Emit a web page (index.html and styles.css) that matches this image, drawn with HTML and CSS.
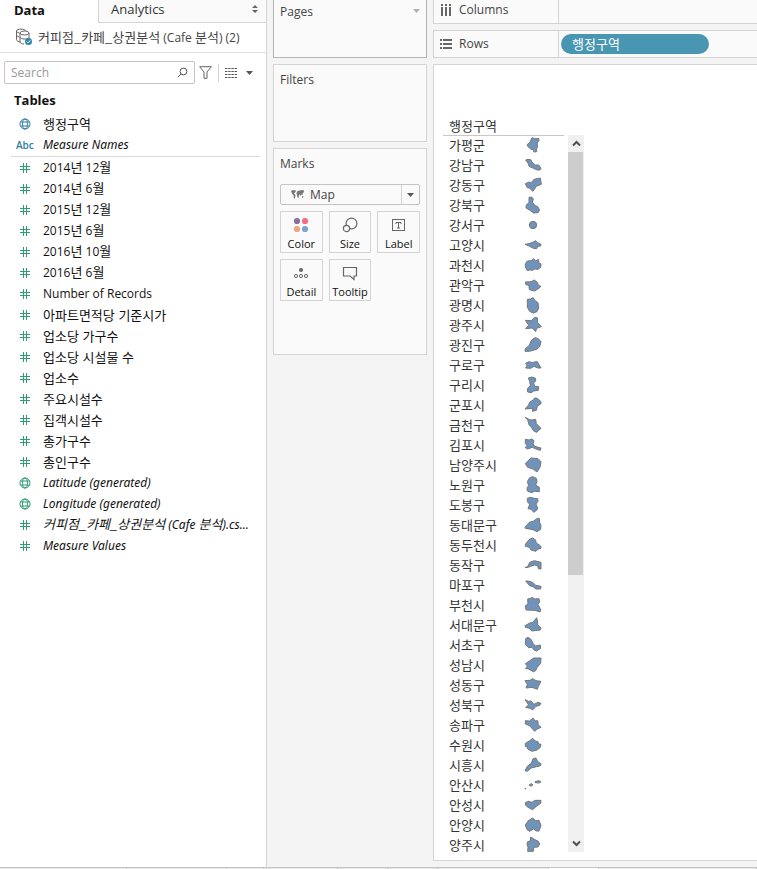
FILE: index.html
```html
<!DOCTYPE html>
<html lang="ko">
<head>
<meta charset="utf-8">
<title>커피점_카페_상권분석</title>
<link rel="stylesheet" href="styles.css">
</head>
<body>
<svg class="defs" aria-hidden="true">
  <symbol id="hash" viewBox="0 0 12 12"><path d="M4.5 1v10M7.5 1v10M1 4.5h10M1 7.5h10"/></symbol>
  <symbol id="globe" viewBox="0 0 12 12"><circle cx="6" cy="6" r="5"/><ellipse cx="6" cy="6" rx="2.4" ry="5"/><path d="M1.5 4h9M1.5 8h9"/></symbol>
</svg>
<div class="workspace">
  <aside class="data-pane">
    <div class="tabs">
      <button class="tab active">Data</button>
      <button class="tab">Analytics
        <svg width="6" height="8" viewBox="0 0 6 8"><path d="M0 3l3-3 3 3zM0 5h6l-3 3z"/></svg>
      </button>
    </div>
    <div class="source">
      <svg width="18" height="18" viewBox="0 0 18 18" fill="none" stroke="#666">
        <path d="M1.5 3v8.500c0 1.500 2 2.500 4 2.500M1.500 3c0-2.500 9-2.500 9 0M1.500 3c0 1 1 1.500 3 2M1.500 7c0 1 1 1.500 2.500 1.800"/>
        <ellipse cx="9.500" cy="5" rx="4.500" ry="2"/><path d="M5 5v9c0 1 2 2 4 2M14 5v5M5 9c0 2 5 2.500 8 1.500"/>
        <circle cx="13.500" cy="13.500" r="3.500" fill="#3186a6" stroke="none"/><path d="M11.800 13.500l1.300 1.300 2.400-2.600" stroke="#fff"/>
      </svg>
      <span><span class="ko">커피점_카페_상권분석</span> (Cafe <span class="ko">분석</span>) (2)</span>
    </div>
    <div class="tools">
      <div class="search">
        <input type="text" placeholder="Search" aria-label="Search">
        <svg width="11" height="11" viewBox="0 0 11 11" fill="none" stroke="#555"><circle cx="6.500" cy="4.500" r="3.400"/><path d="M4 7L.8 10.200"/></svg>
      </div>
      <button class="tool" aria-label="Filter"><svg width="13" height="13" viewBox="0 0 13 13" fill="none" stroke="#666"><path d="M.7.700h11.600L8 6v6.300H5V6z"/></svg></button>
      <span class="rule"></span>
      <button class="tool view" aria-label="View">
        <svg width="13" height="10" viewBox="0 0 13 10" stroke="#555"><path d="M0 .5h12M0 3.500h12M0 6.500h12M0 9.500h12" stroke-dasharray="2.400 .8"/></svg>
        <svg width="7" height="4" viewBox="0 0 7 4"><path d="M0 0h7L3.500 4z" fill="#555"/></svg>
      </button>
    </div>
    <h2>Tables</h2>
    <ul class="fields dims">
      <li><svg><use href="#globe"/></svg><span class="ko">행정구역</span></li>
      <li><b class="abc">Abc</b><i>Measure Names</i></li>
    </ul>
    <ul class="fields">
      <li><svg><use href="#hash"/></svg><span>2014<span class="ko">년</span> 12<span class="ko">월</span></span></li>
      <li><svg><use href="#hash"/></svg><span>2014<span class="ko">년</span> 6<span class="ko">월</span></span></li>
      <li><svg><use href="#hash"/></svg><span>2015<span class="ko">년</span> 12<span class="ko">월</span></span></li>
      <li><svg><use href="#hash"/></svg><span>2015<span class="ko">년</span> 6<span class="ko">월</span></span></li>
      <li><svg><use href="#hash"/></svg><span>2016<span class="ko">년</span> 10<span class="ko">월</span></span></li>
      <li><svg><use href="#hash"/></svg><span>2016<span class="ko">년</span> 6<span class="ko">월</span></span></li>
      <li><svg><use href="#hash"/></svg><span>Number of Records</span></li>
      <li><svg><use href="#hash"/></svg><span class="ko">아파트면적당 기준시가</span></li>
      <li><svg><use href="#hash"/></svg><span class="ko">업소당 가구수</span></li>
      <li><svg><use href="#hash"/></svg><span class="ko">업소당 시설물 수</span></li>
      <li><svg><use href="#hash"/></svg><span class="ko">업소수</span></li>
      <li><svg><use href="#hash"/></svg><span class="ko">주요시설수</span></li>
      <li><svg><use href="#hash"/></svg><span class="ko">집객시설수</span></li>
      <li><svg><use href="#hash"/></svg><span class="ko">총가구수</span></li>
      <li><svg><use href="#hash"/></svg><span class="ko">총인구수</span></li>
      <li><svg><use href="#globe"/></svg><i>Latitude (generated)</i></li>
      <li><svg><use href="#globe"/></svg><i>Longitude (generated)</i></li>
      <li><svg><use href="#hash"/></svg><i><span class="ko">커피점_카페_상권분석</span> (Cafe <span class="ko">분석</span>).cs...</i></li>
      <li><svg><use href="#hash"/></svg><i>Measure Values</i></li>
    </ul>
  </aside>

  <section class="cards">
    <div class="card pages"><h3>Pages</h3><svg width="7" height="4" viewBox="0 0 7 4"><path d="M0 0h7L3.500 4z" fill="#b0b0b0"/></svg></div>
    <div class="card filters"><h3>Filters</h3></div>
    <div class="card marks">
      <h3>Marks</h3>
      <div class="mark-type">
        <svg width="13" height="10" viewBox="0 0 13 10" fill="#777"><path d="M0 1l2-1 3 .5L4.500 2 3 3.500l1.500 1.500L4 8l-.8 1L2.500 5.500 1 3.500zM6 1.500L8 .500 12.500 0l.5 2-1.500 1.500.5 1.500-1.500-.5L9.500 6 8.800 4 8 5.500 7.500 8 6.500 7.500 6 5 5.500 3.500zM11 6l1.500.5-.5 1.500-1-.5z"/></svg>
        <select aria-label="Mark type"><option>Map</option></select>
        <span class="drop"><svg width="7" height="4" viewBox="0 0 7 4"><path d="M0 0h7L3.500 4z" fill="#555"/></svg></span>
      </div>
      <div class="mark-grid">
        <button><svg width="16" height="16" viewBox="0 0 16 16"><circle cx="4" cy="4" r="3.100" fill="#87709d"/><circle cx="12" cy="4" r="3.100" fill="#f96b81"/><circle cx="4" cy="12" r="3.100" fill="#f5a37b"/><circle cx="12" cy="12" r="3.100" fill="#7ba3cf"/></svg>Color</button>
        <button><svg width="16" height="16" viewBox="0 0 16 16" fill="none" stroke="#666" stroke-width="1.200"><circle cx="9.500" cy="6.500" r="5.400"/><circle cx="4.500" cy="11.500" r="3.100" fill="#fafafa"/></svg>Size</button>
        <button><svg width="16" height="16" viewBox="0 0 16 16" fill="none" stroke="#666"><rect x="1.500" y="2.500" width="12" height="11"/><path d="M5 7V5.500h5V7M7.500 5.500v5.500M6 11h3"/></svg>Label</button>
        <button><svg width="16" height="16" viewBox="0 0 16 16" fill="none" stroke="#666"><circle cx="8" cy="5" r="2" fill="#666" stroke="none"/><circle cx="3" cy="11" r="1.600"/><circle cx="8" cy="11" r="1.600"/><circle cx="13" cy="11" r="1.600"/></svg>Detail</button>
        <button><svg width="16" height="16" viewBox="0 0 16 16" fill="none" stroke="#666" stroke-width="1.200"><path d="M1.500 2.500h13v8.500h-2.500v3.500L8 11H1.500z"/></svg>Tooltip</button>
      </div>
    </div>
  </section>

  <main>
    <div class="shelf columns">
      <div class="shelf-name"><svg width="12" height="12" viewBox="0 0 12 12" fill="#666"><path d="M1 0h2v2H1zM5 0h2v2H5zM9 0h2v2H9zM1 3h2v9H1zM5 3h2v9H5zM9 3h2v9H9z"/></svg>Columns</div>
      <div class="shelf-body"></div>
    </div>
    <div class="shelf rows">
      <div class="shelf-name"><svg width="12" height="12" viewBox="0 0 12 12" fill="#666"><path d="M0 1h2v2H0zM0 5h2v2H0zM0 9h2v2H0zM3 1h9v2H3zM3 5h9v2H3zM3 9h9v2H3z"/></svg>Rows</div>
      <div class="shelf-body"><button class="pill ko">행정구역</button></div>
    </div>
    <div class="sheet">
      <table class="ko">
        <thead><tr><th colspan="2">행정구역</th></tr></thead>
        <tbody>
        <tr><th>가평군</th><td><svg viewBox="0 0 54 54"><path d="M24 5L31 8 45 8 44 16 39 21 41 32 38 38 38 47 30 48 28 41 20 39 10 30 10 25 18 19 22 9z"/></svg></td></tr>
        <tr><th>강남구</th><td><svg viewBox="0 0 54 54"><path d="M5 12L12 10 20 11 26 21 34 27 44 27 51 37 48 42 40 42 28 37 15 31 13 23z"/></svg></td></tr>
        <tr><th>강동구</th><td><svg viewBox="0 0 54 54"><path d="M4 23L15 18 22 20 30 10 49 6 52 25 37 31 27 46 17 37 10 35z"/></svg></td></tr>
        <tr><th>강북구</th><td><svg viewBox="0 0 54 54"><path d="M15 4L23 3 28 9 25 18 31 27 42 33 47 43 42 50 29 51 18 43 6 36 7 27 15 19z"/></svg></td></tr>
        <tr><th>강서구</th><td><svg viewBox="0 0 54 54"><circle cx="27" cy="27" r="11"/></svg></td></tr>
        <tr><th>고양시</th><td><svg viewBox="0 0 54 54"><path d="M3 25L15 23 28 18 35 14 40 20 51 25 50 30 41 31 38 38 28 37 17 31z"/></svg></td></tr>
        <tr><th>과천시</th><td><svg viewBox="0 0 54 54"><path d="M10 15L22 14 29 8 35 15 43 10 45 21 51 24 50 34 42 40 32 39 26 43 17 42 10 44 4 33 4 23z"/></svg></td></tr>
        <tr><th>관악구</th><td><svg viewBox="0 0 54 54"><path d="M4 18L22 17 31 12 41 20 43 28 51 31 42 39 31 45 16 41 15 29 5 25z"/></svg></td></tr>
        <tr><th>광명시</th><td><svg viewBox="0 0 54 54"><path d="M10 10L20 9 28 5 32 13 42 20 44 36 39 47 27 51 17 46 10 34z"/></svg></td></tr>
        <tr><th>광주시</th><td><svg viewBox="0 0 54 54"><path d="M4 13L23 14 30 5 40 5 41 20 52 32 38 37 35 47 25 36 5 38 14 28z"/></svg></td></tr>
        <tr><th>광진구</th><td><svg viewBox="0 0 54 54"><path d="M27 8L34 5 43 8 51 17 47 32 38 40 16 46 3 46 4 38 17 27 21 15z"/></svg></td></tr>
        <tr><th>구로구</th><td><svg viewBox="0 0 54 54"><path d="M5 22L15 17 26 20 34 17 40 17 51 36 42 36 30 31 20 37 5 36 9 29z"/></svg></td></tr>
        <tr><th>구리시</th><td><svg viewBox="0 0 54 54"><path d="M13 6L24 3 35 7 35 15 29 21 32 31 44 32 43 43 29 45 22 50 11 48 10 39 19 28 17 16z"/></svg></td></tr>
        <tr><th>군포시</th><td><svg viewBox="0 0 54 54"><path d="M3 39L13 28 18 18 29 11 31 6 40 7 51 17 51 23 40 31 37 43 25 46 27 37z"/></svg></td></tr>
        <tr><th>금천구</th><td><svg viewBox="0 0 54 54"><path d="M3 4L17 11 24 12 35 10 37 23 51 37 38 49 29 45 22 34 15 26 11 11z"/></svg></td></tr>
        <tr><th>김포시</th><td><svg viewBox="0 0 54 54"><path d="M4 10L15 12 23 9 30 14 27 24 32 31 51 36 49 43 38 40 25 34 11 39 4 35 9 28 4 23z"/></svg></td></tr>
        <tr><th>남양주시</th><td><svg viewBox="0 0 54 54"><path d="M4 23L12 14 22 6 42 8 51 17 48 34 39 48 27 39 11 34z"/></svg></td></tr>
        <tr><th>노원구</th><td><svg viewBox="0 0 54 54"><path d="M17 5L27 2 37 7 39 17 35 27 46 34 46 47 31 46 23 50 10 45 9 35 14 29 10 17z"/></svg></td></tr>
        <tr><th>도봉구</th><td><svg viewBox="0 0 54 54"><path d="M10 7L20 4 31 7 41 8 42 16 36 24 41 36 38 43 29 49 22 40 12 38 17 25 10 17z"/></svg></td></tr>
        <tr><th>동대문구</th><td><svg viewBox="0 0 54 54"><path d="M3 33L16 19 29 15 40 7 46 7 47 20 51 27 50 40 39 47 27 41 16 39 4 37z"/></svg></td></tr>
        <tr><th>동두천시</th><td><svg viewBox="0 0 54 54"><path d="M4 25L15 11 26 6 35 12 36 20 50 30 51 37 41 40 36 46 21 42 16 34 4 31z"/></svg></td></tr>
        <tr><th>동작구</th><td><svg viewBox="0 0 54 54"><path d="M3 35L12 31 17 19 31 14 51 19 51 39 43 38 41 29 32 27 20 31 12 34z"/></svg></td></tr>
        <tr><th>마포구</th><td><svg viewBox="0 0 54 54"><path d="M5 15L12 15 26 19 35 28 51 31 50 39 36 39 27 32 17 29z"/></svg></td></tr>
        <tr><th>부천시</th><td><svg viewBox="0 0 54 54"><path d="M11 9L21 7 25 3 30 9 45 8 47 17 42 25 50 41 48 48 33 43 6 42 4 29 12 24z"/></svg></td></tr>
        <tr><th>서대문구</th><td><svg viewBox="0 0 54 54"><path d="M3 29L19 20 26 20 38 5 41 18 41 27 51 36 49 42 23 45 17 37 4 34z"/></svg></td></tr>
        <tr><th>서초구</th><td><svg viewBox="0 0 54 54"><path d="M5 8L12 4 20 9 28 23 34 30 49 27 50 37 38 45 30 42 24 34 14 35 4 25z"/></svg></td></tr>
        <tr><th>성남시</th><td><svg viewBox="0 0 54 54"><path d="M4 23L18 14 29 6 51 6 50 22 39 35 35 44 28 47 12 38 5 38 10 30z"/></svg></td></tr>
        <tr><th>성동구</th><td><svg viewBox="0 0 54 54"><path d="M3 14L18 13 26 8 36 14 51 16 43 31 40 40 24 34 6 36 10 25z"/></svg></td></tr>
        <tr><th>성북구</th><td><svg viewBox="0 0 54 54"><path d="M3 11L13 16 21 15 30 25 42 19 51 22 47 28 36 31 27 41 17 37 5 34 14 27z"/></svg></td></tr>
        <tr><th>송파구</th><td><svg viewBox="0 0 54 54"><path d="M4 14L17 15 27 6 33 15 41 14 43 26 51 34 40 39 32 46 22 35 17 29 4 24z"/></svg></td></tr>
        <tr><th>수원시</th><td><svg viewBox="0 0 54 54"><path d="M4 22L16 15 26 7 34 15 42 17 44 24 51 25 48 35 39 42 24 46 11 39 10 32 4 32z"/></svg></td></tr>
        <tr><th>시흥시</th><td><svg viewBox="0 0 54 54"><path d="M27 8L36 6 41 17 51 23 50 29 38 32 21 36 10 46 3 44 10 31 22 22z"/></svg></td></tr>
        <tr><th>안산시</th><td><svg viewBox="0 0 54 54"><path d="M33 17L44 14 51 17 46 21 34 20zM16 26l6-3 5 4-5 3-6-1zM3 37l2 0 0 2-2 0z"/></svg></td></tr>
        <tr><th>안성시</th><td><svg viewBox="0 0 54 54"><path d="M4 20L13 16 24 19 33 13 51 13 50 22 38 30 26 41 12 34 5 28z"/></svg></td></tr>
        <tr><th>안양시</th><td><svg viewBox="0 0 54 54"><path d="M13 14L26 6 35 14 45 13 51 29 45 45 37 45 28 39 17 46 9 41 4 27z"/></svg></td></tr>
        <tr><th>양주시</th><td><svg viewBox="0 0 54 54"><path d="M20 3L31 10 43 16 47 24 42 33 29 34 28 46 11 46 12 34 9 25 11 17 19 15z"/></svg></td></tr>
        </tbody>
      </table>
      <div class="scrollbar">
        <button aria-label="Scroll up"><svg width="9" height="7" viewBox="0 0 9 7"><path d="M1 5.500l3.500-3.500L8 5.500"/></svg></button>
        <div class="track"><div class="thumb"></div></div>
        <button aria-label="Scroll down"><svg width="9" height="7" viewBox="0 0 9 7"><path d="M1 1.500L4.500 5 8 1.500"/></svg></button>
      </div>
    </div>
  </main>
</div>
<footer class="sheet-tabs"><span></span><span></span><span></span><span></span><span></span><span></span><span></span><span class="current"></span><span></span></footer>
</body>
</html>
```

FILE: styles.css
```css
* { box-sizing: border-box; }
body {
  margin: 0;
  min-height: 100vh;
  display: flex;
  flex-direction: column;
  overflow: hidden;
  background: #f4f4f4;
  color: #111;
  font: 12px/20px "Open Sans", "Noto Sans CJK KR", sans-serif;
}
.ko { font-family: "Noto Sans CJK KR", sans-serif; font-size: 13px; font-weight: 400; }
button, input, select { font: inherit; color: inherit; background: none; border: 0; padding: 0; margin: 0; }
h2, h3, ul { margin: 0; padding: 0; }
svg { flex: none; display: block; }
.defs { position: absolute; width: 0; height: 0; }

.workspace { flex: 1; display: flex; }

/* Data pane */
.data-pane { width: 267px; flex: none; background: #fff; border-right: 1px solid #d4d4d4; }
.tabs { display: flex; height: 23px; font-size: 13px; }
.tab { width: 98px; padding: 0 14px 4px; text-align: left; }
.tab.active { font-weight: 700; }
.tab:not(.active) {
  flex: 1;
  display: flex;
  align-items: center;
  justify-content: space-between;
  padding: 0 8px 4px 12px;
  background: #fafafa;
  border-left: 1px solid #d4d4d4;
  border-bottom: 1px solid #d4d4d4;
  color: #333;
}
.tab svg { fill: #666; }
.source {
  display: flex;
  align-items: center;
  gap: 5px;
  height: 30px;
  padding: 0 0 1px 15px;
  border-bottom: 1px solid #e0e0e0;
  color: #444;
  white-space: nowrap;
}
.tools { display: flex; align-items: center; padding: 8px 13px 0 4px; }
.search {
  flex: 1;
  display: flex;
  align-items: center;
  height: 23px;
  padding: 0 6px;
  border: 1px solid #c4c4c4;
  border-radius: 2px;
}
.search input { flex: 1; min-width: 0; outline: 0; }
.search input::placeholder { color: #999; }
.tool { display: flex; align-items: center; gap: 8px; margin-left: 4px; }
.rule { width: 1px; height: 18px; margin: 0 2px 0 6px; background: #d4d4d4; }
h2 { padding-left: 14px; margin-top: 6px; font-size: 13px; line-height: 20px; }
.fields { list-style: none; margin-left: 11px; margin-right: 6px; color: #2e9c74; }
.fields.dims { margin-top: 3px; padding-bottom: 1px; border-bottom: 1px solid #d9d9d9; color: #3181a3; }
.fields li { display: flex; align-items: center; height: 21px; white-space: nowrap; }
.fields svg { width: 12px; height: 12px; margin: 0 12px 0 8px; fill: none; stroke: currentColor; }
.fields span, .fields i { color: #111; }
.fields i { font-family: "Noto Sans", "Noto Sans CJK KR", sans-serif; }
.fields .abc { width: 32px; padding-left: 5px; font-size: 10px; font-weight: 600; }

/* Cards */
.cards { width: 166px; flex: none; padding: 0 6px; }
.card { background: #fafafa; border: 1px solid #d4d4d4; padding: 5px 6px; margin-bottom: 6px; }
.card h3 { font-size: 12px; font-weight: 400; line-height: 20px; color: #444; }
.pages { display: flex; justify-content: space-between; height: 58px; padding-top: 2px; border-color: #b4b4b4; border-top: 0; }
.pages svg { margin-top: 7px; }
.filters { height: 78px; }
.marks { height: 207px; }
.mark-type {
  display: flex;
  align-items: center;
  height: 21px;
  margin: 10px 0 6px;
  padding-left: 10px;
  border: 1px solid #c4c4c4;
  border-radius: 2px;
  color: #444;
}
.mark-type select { appearance: none; flex: 1; min-width: 0; padding-left: 6px; line-height: 18px; }
.drop { display: flex; align-items: center; height: 19px; padding: 0 5px; border-left: 1px solid #d4d4d4; }
.mark-grid { display: grid; grid-template-columns: repeat(3, 1fr); gap: 6px; }
.mark-grid button {
  display: flex;
  flex-direction: column;
  align-items: center;
  gap: 3px;
  height: 42px;
  padding-top: 5px;
  border: 1px solid #d4d4d4;
  font-size: 11px;
  line-height: 16px;
}

/* Shelves and sheet */
main { flex: 1; min-width: 0; display: flex; flex-direction: column; }
.shelf { display: flex; height: 28px; margin-bottom: 6px; background: #fafafa; border: 1px solid #d4d4d4; border-right: 0; }
.shelf.columns { height: 24px; border-top: 0; }
.shelf-name { display: flex; align-items: center; gap: 7px; width: 125px; padding-left: 6px; border-right: 1px solid #d4d4d4; color: #444; }
.columns .shelf-name { padding-bottom: 4px; }
.shelf-body { flex: 1; display: flex; align-items: center; padding-left: 2px; }
.pill { width: 148px; height: 20px; padding-left: 11px; border-radius: 10px; background: #4996b2; color: #fff; text-align: left; line-height: 18px; }
.sheet {
  flex: 1;
  display: flex;
  align-items: flex-start;
  gap: 4px;
  margin-bottom: 6px;
  padding: 52px 9px 4px;
  background: #fff;
  border: 1px solid #d4d4d4;
  border-right: 0;
}
table { border-spacing: 0; width: 121px; color: #333; line-height: 18px; }
table th { padding: 0 0 0 6px; font-weight: 400; text-align: left; vertical-align: top; white-space: nowrap; }
thead th { border-bottom: 1px solid #c8c8c8; }
tbody tr { height: 20px; }
td { padding: 0; width: 40px; vertical-align: top; }
td svg { width: 18px; height: 18px; fill: #6f93ba; stroke: #777; stroke-width: 3; stroke-linejoin: round; }
.scrollbar { display: flex; flex-direction: column; width: 16px; height: 717px; margin-top: 18px; background: #f0f0f0; }
.scrollbar button { display: flex; align-items: center; justify-content: center; height: 17px; }
.scrollbar path { fill: none; stroke: #505050; stroke-width: 2; }
.track { flex: 1; }
.thumb { width: 15px; height: 62%; background: #cdcdcd; }
.sheet-tabs { display: grid; grid-template-columns: 127fr 100fr 37fr 74fr 50fr 50fr 111fr 50fr 158fr; height: 2px; border-top: 1px solid #c4c4c4; background: #e8e8e8; }
.sheet-tabs span { border-right: 1px solid #c8c8c8; }
.sheet-tabs .current { background: #fff; }
```
